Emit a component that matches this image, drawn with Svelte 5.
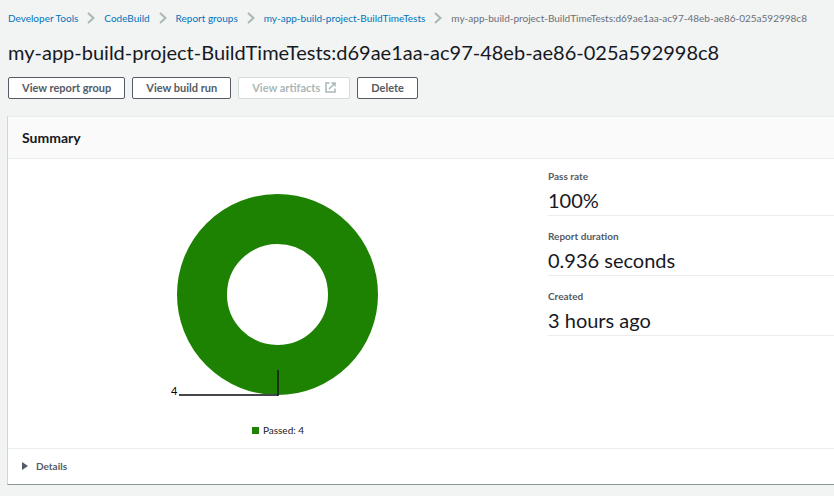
<script>
  const reportName = 'my-app-build-project-BuildTimeTests:d69ae1aa-ac97-48eb-ae86-025a592998c8';
  const trail = ['Developer Tools', 'CodeBuild', 'Report groups', 'my-app-build-project-BuildTimeTests'];
  const facts = [
    { label: 'Pass rate', value: '100%' },
    { label: 'Report duration', value: '0.936 seconds' },
    { label: 'Created', value: '3 hours ago' }
  ];
</script>

<main>
  <nav aria-label="Breadcrumb">
    <ol>
      {#each trail as name}
        <li>
          <a href="#top">{name}</a>
          <svg class="chevron" width="8" height="12" viewBox="0 0 8 12" aria-hidden="true">
            <path d="M1 1 L6.5 6 L1 11" />
          </svg>
        </li>
      {/each}
      <li aria-current="page">{reportName}</li>
    </ol>
  </nav>

  <h1>{reportName}</h1>

  <div class="actions">
    <button type="button">View report group</button>
    <button type="button">View build run</button>
    <button type="button" disabled>
      View artifacts
      <svg width="11" height="11" viewBox="0 0 11 11" aria-hidden="true">
        <path d="M4.5 1H1v9h9V6.5M6.5 1H10v3.5M10 1L4 7" />
      </svg>
    </button>
    <button type="button">Delete</button>
  </div>

  <section class="card">
    <h2>Summary</h2>
    <div class="body">
      <figure>
        <svg class="chart" width="212" height="212" viewBox="0 0 212 212" role="img" aria-label="Passed: 4">
          <circle cx="111.5" cy="104.5" r="75.5" />
          <path class="lead" d="M13 205H112" />
          <path class="stem" d="M112 180V206" />
          <text x="5" y="205">4</text>
        </svg>
        <figcaption><span class="swatch"></span>Passed: 4</figcaption>
      </figure>
      <dl>
        {#each facts as fact}
          <div class="fact">
            <dt>{fact.label}</dt>
            <dd>{fact.value}</dd>
          </div>
        {/each}
      </dl>
    </div>
    <details>
      <summary>
        <svg width="6" height="8" viewBox="0 0 6 8" aria-hidden="true"><path d="M0 0L6 4L0 8Z" /></svg>
        Details
      </summary>
    </details>
  </section>
</main>

<style>
  :global(body) {
    background: #f2f3f3;
  }
  main {
    padding: 8px 0 11px 8px;
    overflow: hidden;
    color: #16191f;
    font-family: Lato, 'Open Sans', sans-serif;
    font-size: 10px;
    line-height: 20px;
  }
  ol {
    display: flex;
    margin: 0;
    padding: 0;
    list-style: none;
    white-space: nowrap;
    color: #687078;
  }
  li {
    display: flex;
    align-items: center;
  }
  a {
    color: #0073bb;
    text-decoration: none;
  }
  .chevron {
    margin: 0 9px;
    fill: none;
    stroke: #aab7b8;
    stroke-width: 2;
  }
  h1 {
    margin: 10px 0;
    font-size: 20px;
    font-weight: 400;
    line-height: 29px;
    white-space: nowrap;
  }
  .actions {
    display: flex;
    gap: 7px;
  }
  button {
    display: flex;
    align-items: center;
    gap: 5px;
    height: 22px;
    padding: 0 13px 1px;
    border: 1px solid #545b64;
    border-radius: 2px;
    background: #fff;
    color: #545b64;
    font-family: inherit;
    font-size: 11px;
    font-weight: 700;
    white-space: nowrap;
  }
  button:disabled {
    border-color: #d5dbdb;
    color: #aab7b8;
  }
  button svg {
    fill: none;
    stroke: currentColor;
    stroke-width: 1.5;
  }
  .card {
    margin: 17px 0 0 -1px;
    border: 1px solid #eaeded;
    border-left-color: #d0d5d5;
    border-right: 0;
    border-bottom-color: #879596;
    background: #fff;
  }
  h2 {
    margin: 0;
    padding: 11px 14px 10px;
    border-bottom: 1px solid #eaeded;
    background: #fafafa;
    font-size: 14px;
    font-weight: 700;
    line-height: 20px;
  }
  .body {
    display: grid;
    grid-template-columns: 540fr 286fr;
    padding-bottom: 8px;
  }
  figure {
    display: flex;
    flex-direction: column;
    align-items: center;
    margin: 0;
    padding-top: 31px;
  }
  .chart {
    margin-right: 12px;
  }
  .chart circle {
    fill: none;
    stroke: #1d8102;
    stroke-width: 50;
  }
  .chart .stem {
    stroke: #16191f;
    stroke-width: 1.5;
  }
  .chart .lead {
    stroke: #45454c;
    stroke-width: 2;
  }
  .chart text {
    font-size: 11px;
  }
  figcaption {
    display: flex;
    align-items: center;
    gap: 4px;
    margin-top: 18px;
  }
  .swatch {
    width: 7px;
    height: 7px;
    background: #1d8102;
  }
  dl {
    margin: 0;
    padding-top: 7px;
  }
  .fact {
    height: 49px;
    margin-bottom: 10px;
    border-bottom: 1px solid #eaeded;
  }
  dt {
    color: #545b64;
    font-size: 10px;
    font-weight: 700;
  }
  dd {
    margin: 0;
    font-size: 20px;
    line-height: 29px;
  }
  details {
    border-top: 1px solid #eaeded;
  }
  summary {
    display: flex;
    align-items: center;
    gap: 8px;
    padding: 7px 14px 8px;
    color: #545b64;
    font-weight: 700;
    list-style: none;
  }
  summary svg {
    fill: #545b64;
  }
</style>
